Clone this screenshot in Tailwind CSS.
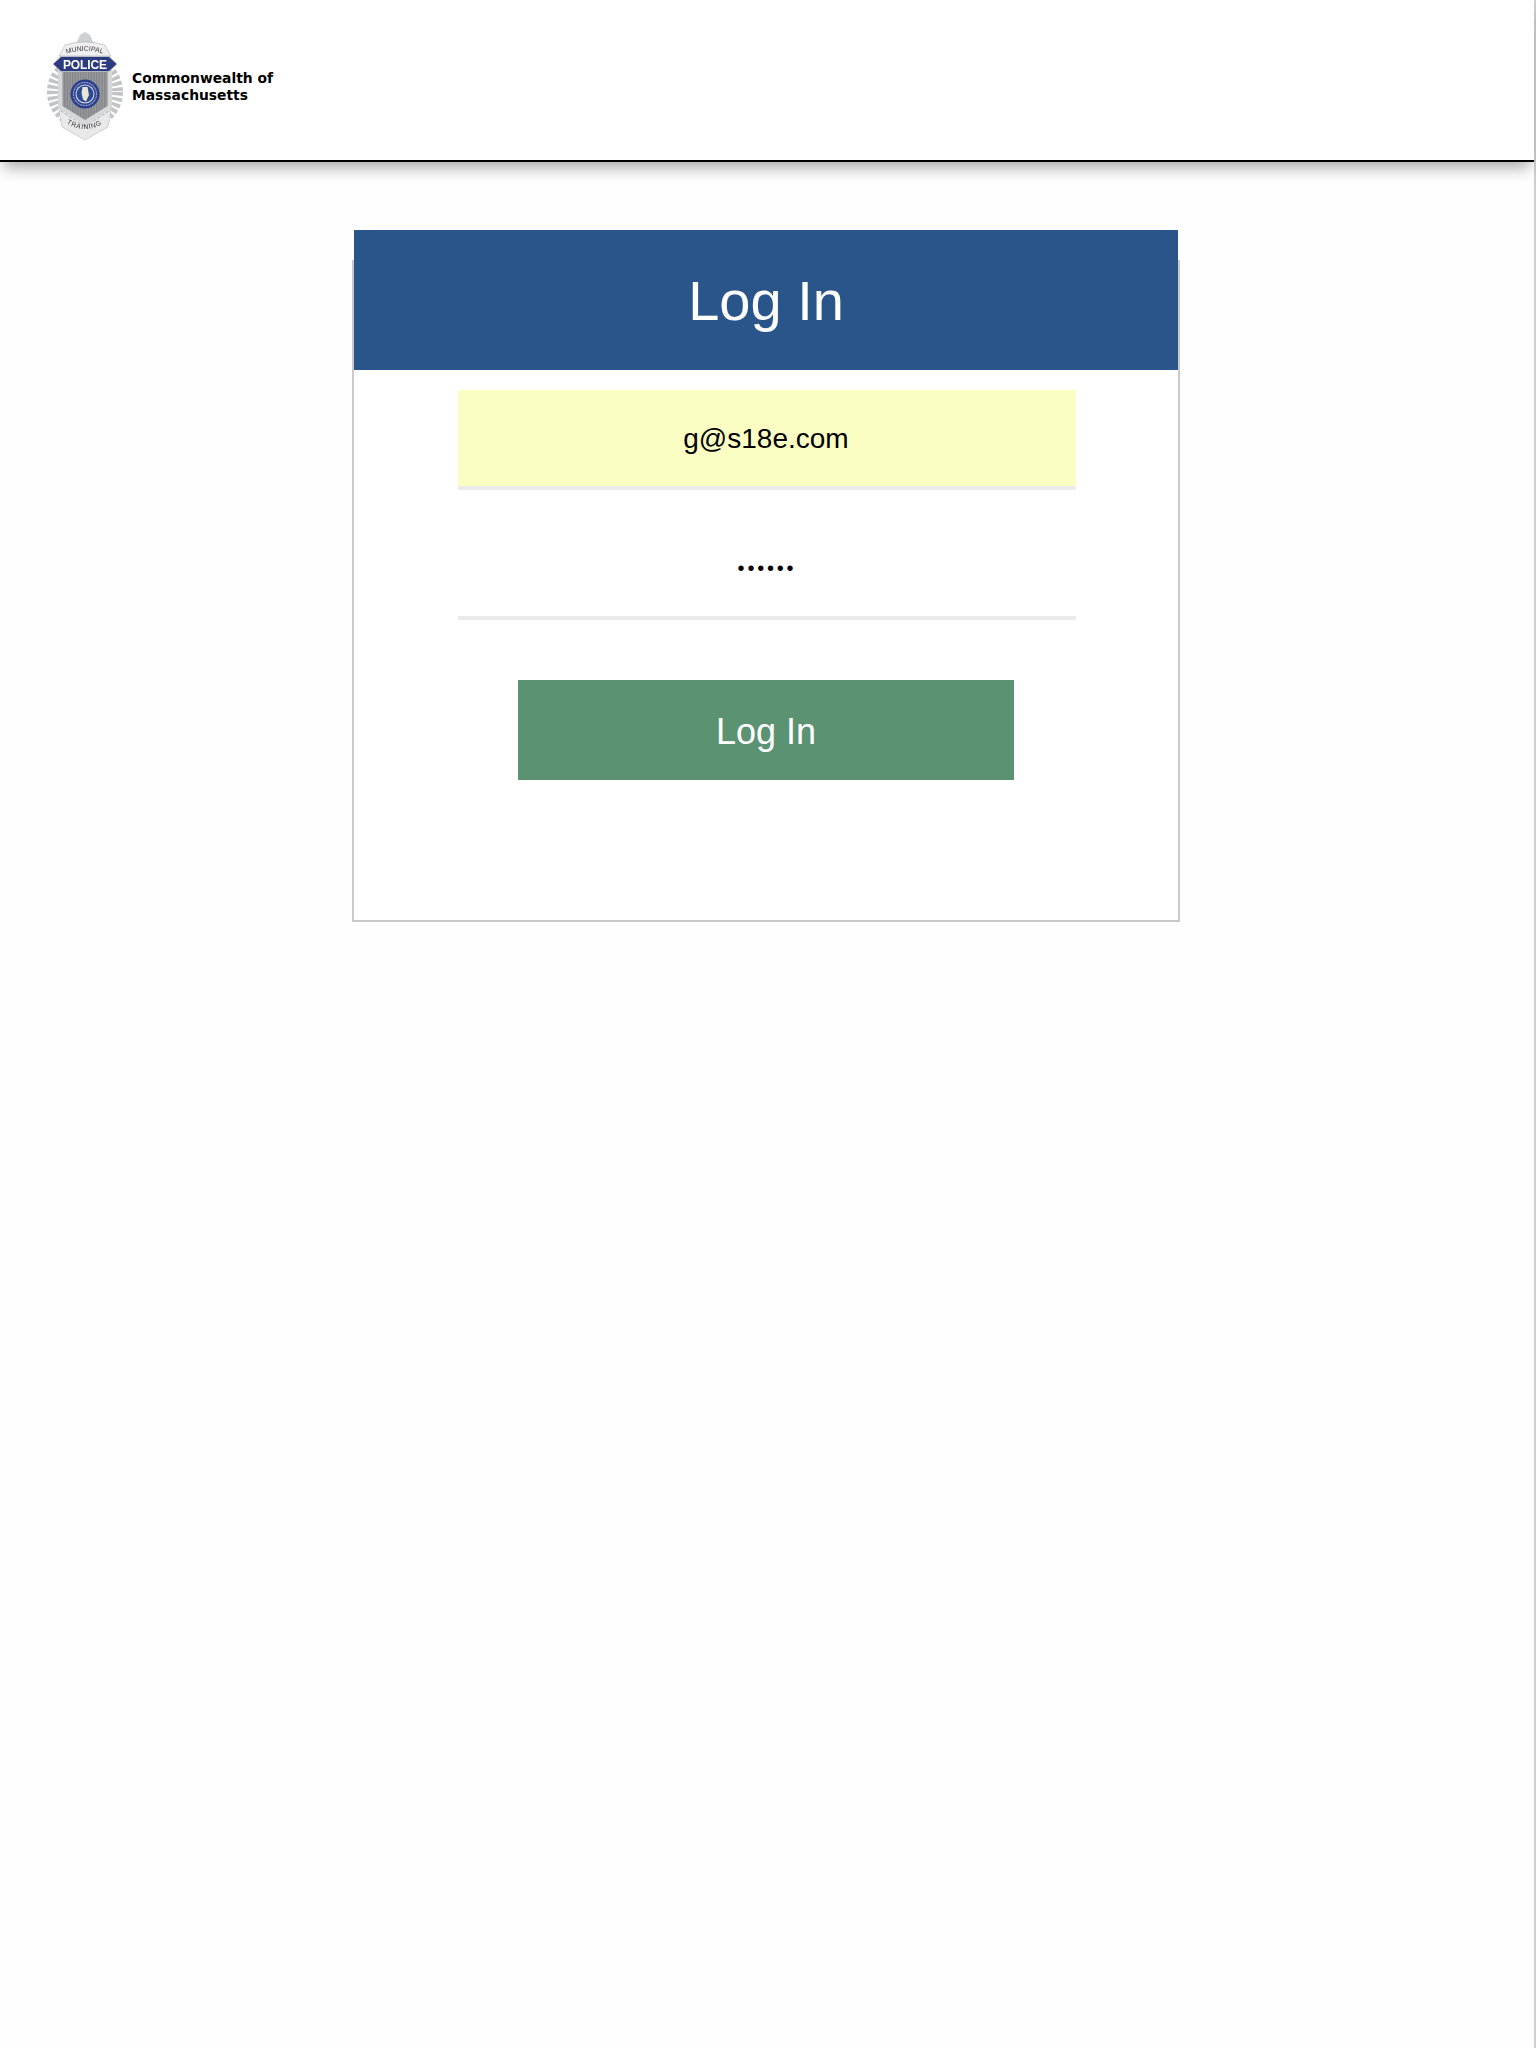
<!DOCTYPE html>
<html lang="en">
<head>
<meta charset="utf-8">
<title>Log In</title>
<script src="https://cdn.jsdelivr.net/npm/@tailwindcss/browser@4"></script>
</head>
<body class="bg-white">
<div class="min-h-[2048px] w-[1536px] border-r-2 border-[#cfcfcf] bg-[#fefefe] font-['Liberation_Sans',Arial,sans-serif]">
  <header class="relative flex h-[162px] items-center border-b-2 border-black bg-white pl-[40px] shadow-[0_10px_14px_-4px_rgba(0,0,0,0.32)]">
    <svg class="mt-[8px] h-[120px] w-[90px] shrink-0 blur-[0.45px]" viewBox="0 0 90 120" aria-label="Municipal Police Training badge">
      <defs>
        <pattern id="stripes" width="1.6" height="4" patternUnits="userSpaceOnUse">
          <rect width="1.6" height="4" fill="#9a9c9f"/>
          <rect width="0.7" height="4" fill="#7f8184"/>
        </pattern>
        <path id="arcTop" d="M26 30 Q45 23.5 64 30"/>
        <path id="arcBottom" d="M26 99 Q45 111 64 99"/>
      </defs>
      <circle cx="45" cy="68" r="30.5" fill="none" stroke="#c2c4c7" stroke-width="15" stroke-dasharray="3.2 2"/>
      <path d="M45 8 L50 11 L53 18 L64 21 L70 33 L20 33 L26 21 L37 18 L40 11 Z" fill="#cfd0d2"/>
      <path d="M25 21 Q45 15 65 21 L71 32 L19 32 Z" fill="#efeff0" stroke="#b9babc" stroke-width="0.7"/>
      <text font-family="Liberation Sans" font-size="6.8" fill="#333336" textLength="37"><textPath href="#arcTop" startOffset="0.5">MUNICIPAL</textPath></text>
      <path d="M18 46 L72 46 L72 84 L45 102 L18 84 Z" fill="#d6d7d9"/>
      <path d="M22.5 47 L67.5 47 L67.5 82 L45 96 L22.5 82 Z" fill="url(#stripes)"/>
      <path d="M21 32.5 L69 32.5 L77 40 L69 47.5 L21 47.5 L13 40 Z" fill="#2c3a80" stroke="#c9cacc" stroke-width="0.8"/>
      <text x="45" y="44.5" text-anchor="middle" font-family="Liberation Sans" font-size="12" font-weight="bold" fill="#fff" textLength="44">POLICE</text>
      <circle cx="45" cy="70" r="14.5" fill="#2c3f8c"/>
      <circle cx="45" cy="70" r="11.5" fill="none" stroke="#aeb6d4" stroke-width="1.2" stroke-dasharray="1 0.6"/>
      <circle cx="45" cy="70" r="9.5" fill="#dfe3ee"/>
      <circle cx="45" cy="70" r="8.5" fill="#2b4a94"/>
      <path d="M42.5 63 L47.5 63 L49 71 L46 77.5 L43 75.5 L41.5 69 Z" fill="#e8e6d5"/>
      <path d="M19 86 L45 103 L71 86 L68 103 L45 116 L22 103 Z" fill="#e9e9ea" stroke="#c0c1c3" stroke-width="0.7"/>
      <text font-family="Liberation Sans" font-size="6.8" fill="#333336" textLength="37"><textPath href="#arcBottom" startOffset="0.5">TRAINING</textPath></text>
    </svg>
    <p class="ml-[2px] mt-[13px] font-['DejaVu_Sans',Verdana,sans-serif] text-[13.85px] leading-[16.5px] font-bold text-black">Commonwealth of<br>Massachusetts</p>
  </header>
  <main class="ml-[352px] mt-[98px] flex h-[662px] w-[828px] flex-col items-center border-2 border-[#cacaca] bg-white">
    <h1 class="-mt-[32px] flex h-[140px] w-full shrink-0 items-center justify-center bg-[#29558b] pt-[2px] text-[56px] font-normal text-white">Log In</h1>
    <input class="ml-[2px] mt-[20px] h-[100px] w-[618px] shrink-0 border-b-4 border-[#ebebeb] bg-[#fbfec3] pr-[2px] pt-[2px] text-center text-[28px] text-black outline-none" type="text" value="g@s18e.com">
    <input class="ml-[2px] mt-[30px] h-[100px] w-[618px] shrink-0 border-b-4 border-[#ebebeb] bg-white text-center text-[20px] tracking-[2.8px] text-black outline-none" type="password" value="secret">
    <button class="mt-[60px] h-[100px] w-[496px] shrink-0 bg-[#5b9372] pt-[3px] text-[36px] text-white" type="button">Log In</button>
  </main>
</div>
</body>
</html>
